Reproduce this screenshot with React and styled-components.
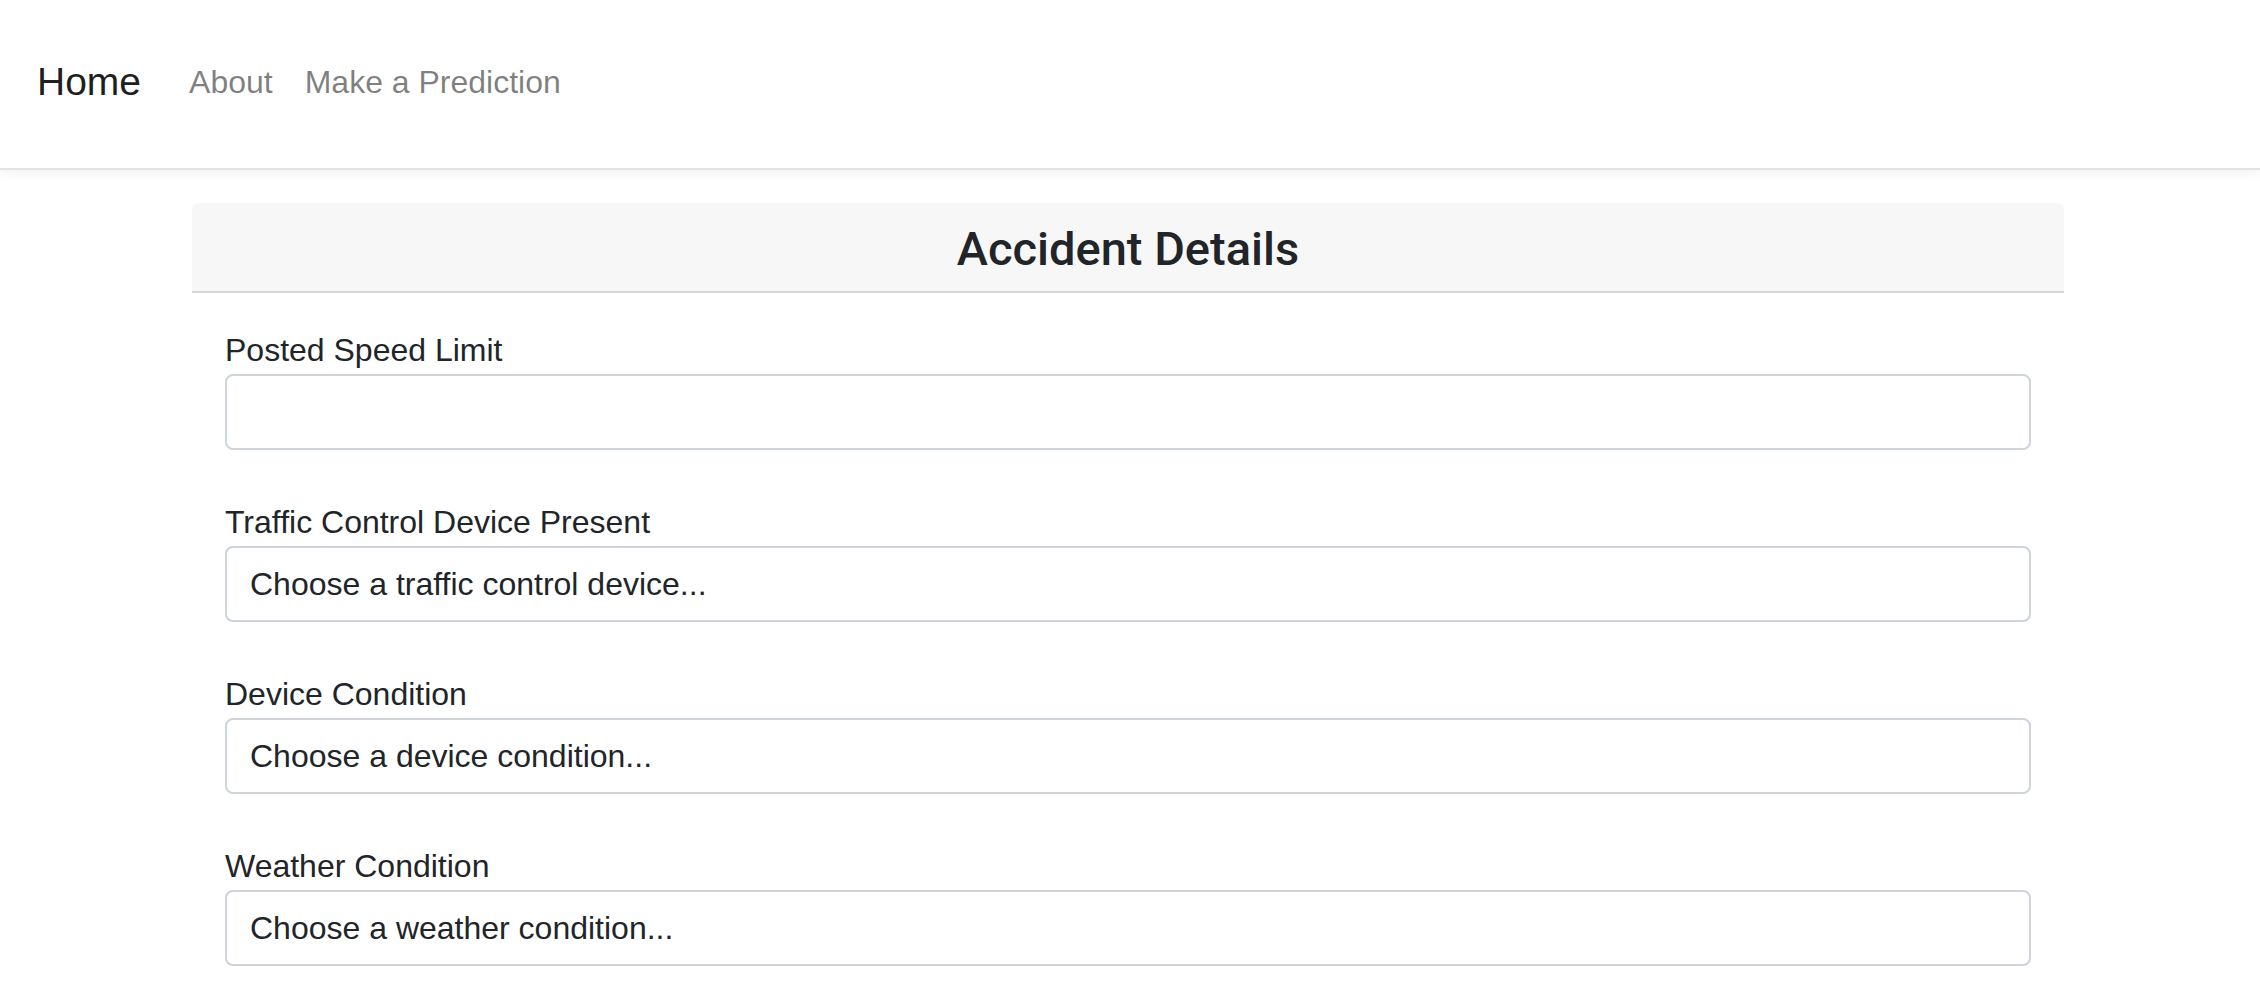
import styled, { createGlobalStyle } from 'styled-components';

const GlobalStyle = createGlobalStyle`
  html, body {
    margin: 0;
    padding: 0;
    background: #fff;
  }
  body {
    font-family: "Liberation Sans", Arial, sans-serif;
    color: #212529;
  }
  * {
    box-sizing: border-box;
  }
`;

const Navbar = styled.nav`
  display: flex;
  align-items: center;
  height: 170px;
  padding: 0 0 4px 37px;
  background: #fff;
  border-bottom: 2px solid #e1e2e4;
  box-shadow: 0 4px 10px rgba(0, 0, 0, 0.05);
`;

const Brand = styled.a`
  font-size: 39px;
  line-height: 60px;
  color: rgba(0, 0, 0, 0.9);
  text-decoration: none;
  margin-right: 32px;
`;

const NavLink = styled.a`
  font-size: 32px;
  line-height: 48px;
  padding: 0 16px;
  color: rgba(0, 0, 0, 0.5);
  text-decoration: none;
`;

const Card = styled.section`
  width: 1872px;
  margin: 33px 0 0 calc(50% - 938px);
  background: #fff;
  border-radius: 8px;
`;

const CardHeader = styled.header`
  padding: 17px 0 14px;
  background: #f7f7f7;
  border-bottom: 2px solid #d6d6d6;
  border-radius: 8px 8px 0 0;
  text-align: center;
`;

const Title = styled.h4`
  margin: 0;
  font-family: Roboto, "Liberation Sans", Arial, sans-serif;
  font-size: 47px;
  font-weight: 500;
  line-height: 57px;
  color: #212529;
`;

const CardBody = styled.form`
  padding: 33px 33px 0;
`;

const Field = styled.div`
  margin-bottom: 48px;
`;

const Label = styled.label`
  display: block;
  font-size: 32px;
  line-height: 48px;
  color: #212529;
`;

const controlStyles = `
  display: block;
  width: 100%;
  height: 76px;
  padding: 0 23px;
  font-family: "Liberation Sans", Arial, sans-serif;
  font-size: 32px;
  color: #212529;
  background: #fff;
  border: 2px solid #ced4da;
  border-radius: 8px;
  outline: none;
  appearance: none;
  -webkit-appearance: none;
`;

const TextInput = styled.input`
  ${controlStyles}
`;

const Select = styled.select`
  ${controlStyles}
`;

const fields = [
  { id: 'device', label: 'Traffic Control Device Present', placeholder: 'Choose a traffic control device...' },
  { id: 'condition', label: 'Device Condition', placeholder: 'Choose a device condition...' },
  { id: 'weather', label: 'Weather Condition', placeholder: 'Choose a weather condition...' },
];

export default function App() {
  return (
    <>
      <GlobalStyle />
      <Navbar>
        <Brand href="#">Home</Brand>
        <NavLink href="#">About</NavLink>
        <NavLink href="#">Make a Prediction</NavLink>
      </Navbar>
      <Card>
        <CardHeader>
          <Title>Accident Details</Title>
        </CardHeader>
        <CardBody>
          <Field>
            <Label htmlFor="speed">Posted Speed Limit</Label>
            <TextInput id="speed" type="text" />
          </Field>
          {fields.map((f) => (
            <Field key={f.id}>
              <Label htmlFor={f.id}>{f.label}</Label>
              <Select id={f.id} defaultValue="">
                <option value="" disabled>{f.placeholder}</option>
              </Select>
            </Field>
          ))}
        </CardBody>
      </Card>
    </>
  );
}
